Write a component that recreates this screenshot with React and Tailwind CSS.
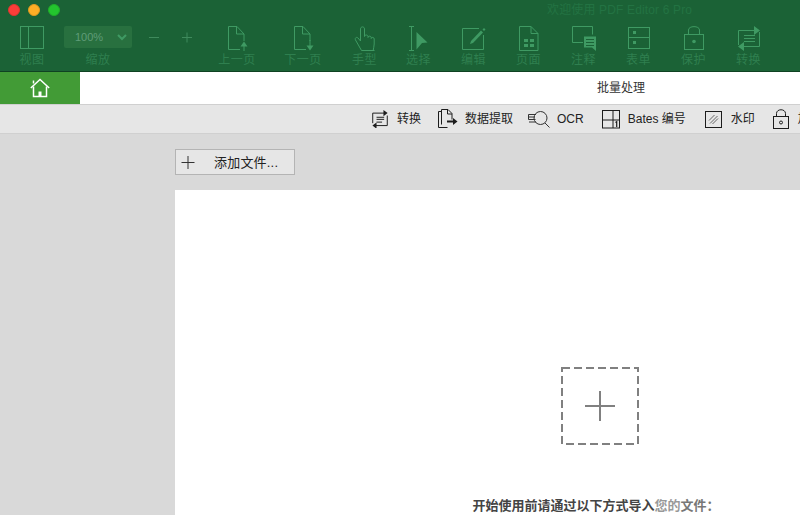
import React from "react";

const FONT = "font-['Liberation_Sans','Noto_Sans_CJK_SC',sans-serif]";

// toolbar glyphs, 26x26 box
const ViewIcon = () => (
  <svg width="26" height="26" viewBox="0 0 26 26" fill="none" stroke="currentColor">
    <rect x="1.5" y=".5" width="23" height="22" />
    <path d="M9.5 .5v22" />
  </svg>
);
const PageBase = ({ children }) => (
  <svg width="26" height="26" viewBox="0 0 26 26" fill="none" stroke="currentColor">
    <path d="M16 23.5H4.5v-23H13l7 7.5v7" />
    <path d="M12.5 .5v7.5h7.5" />
    {children}
  </svg>
);
const PrevIcon = () => (
  <PageBase>
    <path d="M20 25v-7" />
    <path d="M16.500 20.500l3.500-5 3.500 5z" fill="currentColor" stroke="none" />
  </PageBase>
);
const NextIcon = () => (
  <PageBase>
    <path d="M20 14v7" />
    <path d="M16.500 19.500l3.500 5 3.500-5z" fill="currentColor" stroke="none" />
  </PageBase>
);
const HandIcon = () => (
  <svg width="26" height="26" viewBox="0 0 26 26" fill="none" stroke="currentColor">
    <path d="M9.500 24.500L3.500 14c-1-2 1-3.500 2.500-2l2.500 3V3c0-2.800 4-2.800 4 0v7.500c0-2 3.500-2 3.500 0v1c0-1.800 3.200-1.800 3.200 0v1c0-1.600 3-1.600 3 .5v5c0 2.500-.8 4-1 6.500" />
    <path d="M9.500 24.500h13" />
  </svg>
);
const SelectIcon = () => (
  <svg width="26" height="26" viewBox="0 0 26 26" fill="none" stroke="currentColor">
    <path d="M3 .5h5M3 24.500h5M5.500 .5v24" />
    <path d="M10.500 6l11 10.500-5.500.5-5.500 6.500z" fill="currentColor" stroke="none" />
  </svg>
);
const EditIcon = () => (
  <svg width="26" height="26" viewBox="0 0 26 26" fill="none" stroke="currentColor">
    <path d="M18 2.500H1.500v21h21V9" />
    <path d="M9 18l1-3L20 4.500l2 2L12 17z" fill="currentColor" stroke="none" />
    <path d="M21.500 3.500l1.500-1.500 1.500 1.500-1.500 1.500z" fill="currentColor" stroke="none" />
  </svg>
);
const PagesIcon = () => (
  <svg width="26" height="26" viewBox="0 0 26 26" fill="none" stroke="currentColor">
    <path d="M3.500 24.500V.5H15l7 7v17z" />
    <path d="M15 .5v7h7" />
    <path d="M8 13h4v3H8zM14 13h4v3h-4zM8 18h4v3H8zM14 18h4v3h-4z" fill="currentColor" stroke="none" />
  </svg>
);
const NoteIcon = () => (
  <svg width="26" height="26" viewBox="0 0 26 26" fill="none" stroke="currentColor">
    <path d="M12 16.500H1.500v-16h20v8" />
    <path d="M13 10.500h12v14.500l-4-3.500h-8z" fill="currentColor" stroke="none" />
    <path d="M15 13.500h8M15 16.500h8M15 19.500h8" stroke="#1b6236" />
  </svg>
);
const FormIcon = () => (
  <svg width="26" height="26" viewBox="0 0 26 26" fill="none" stroke="currentColor">
    <rect x="2.500" y="1.500" width="21" height="21" />
    <path d="M2.500 11.500h21" />
    <path d="M7 5h3v3H7zM7 15h3v3H7z" fill="currentColor" stroke="none" />
  </svg>
);
const LockIcon = () => (
  <svg width="26" height="26" viewBox="0 0 26 26" fill="none" stroke="currentColor">
    <rect x="3.500" y="8.500" width="19" height="15" />
    <path d="M7.500 8.500V4c0-4.500 11-4.500 11 0v4.500" />
    <circle cx="13" cy="15.500" r="1.800" fill="currentColor" stroke="none" />
  </svg>
);
const ConvertIcon = () => (
  <svg width="26" height="26" viewBox="0 0 26 26" fill="none" stroke="currentColor">
    <path d="M20 4.500H2.500V19" />
    <path d="M6 20.500h17.500V6" />
    <path d="M8 9.500h11M8 12.500h11M8 15.500h11" />
    <path d="M18 0l6 4.500-6 4.500zM8 16l-6 4.500 6 4.500z" fill="currentColor" stroke="none" />
  </svg>
);

const tools = [
  { label: "上一页", Icon: PrevIcon, cls: "w-[60px] ml-[14px]" },
  { label: "下一页", Icon: NextIcon, cls: "w-[60px] ml-[6px]" },
  { label: "手型", Icon: HandIcon, cls: "w-[55px] ml-[4px]" },
  { label: "选择", Icon: SelectIcon, cls: "w-[55px] ml-[-1px]" },
  { label: "编辑", Icon: EditIcon, cls: "w-[55px]" },
  { label: "页面", Icon: PagesIcon, cls: "w-[55px]" },
  { label: "注释", Icon: NoteIcon, cls: "w-[55px]" },
  { label: "表单", Icon: FormIcon, cls: "w-[55px]" },
  { label: "保护", Icon: LockIcon, cls: "w-[55px]" },
  { label: "转换", Icon: ConvertIcon, cls: "w-[55px]" },
];

const Tool = ({ label, Icon, cls }) => (
  <div className={`flex flex-col items-center shrink-0 ${cls}`}>
    <div className="h-[26px] text-[#3f9a63]">
      <Icon />
    </div>
    <span className="text-[12px] leading-[14px] mt-[1px] tracking-[0.5px] text-[#2f7f4f] whitespace-nowrap">{label}</span>
  </div>
);

// ribbon glyphs
const RibbonConvert = () => (
  <svg width="18" height="18" viewBox="0 0 26 26" fill="none" stroke="#1c1c1c" strokeWidth="1.400">
    <path d="M20 4.500H2.500V19" />
    <path d="M6 22.500h17.500V8" />
    <path d="M8 10.500h11M8 13.500h11M8 17.500h8" />
    <path d="M18 0l6 4.500-6 4.500zM8 18l-6 4.500 6 4.500z" fill="#1c1c1c" stroke="none" />
  </svg>
);
const RibbonExtract = () => (
  <svg width="21" height="20" viewBox="0 0 21 20" fill="none" stroke="#1c1c1c">
    <path d="M4.500 2.500H1.500v16h9" />
    <path d="M4.500 15.500V.5H11l4 4v6" />
    <path d="M10.500 .5v4.500H15" />
    <path d="M10 12.500h6" strokeWidth="2" />
    <path d="M16 9l4.500 3.500L16 16z" fill="#1c1c1c" stroke="none" />
  </svg>
);
const RibbonOcr = () => (
  <svg width="23" height="18" viewBox="0 0 23 18" fill="none" stroke="#333">
    <path d="M8 4.500H.5v5h7M1 12h7" />
    <path d="M1 7h6" />
    <circle cx="12.500" cy="8" r="6.500" />
    <path d="M17 13l4.500 4.500" />
  </svg>
);
const RibbonBates = () => (
  <svg width="18" height="19" viewBox="0 0 18 19" fill="none" stroke="#1c1c1c">
    <rect x=".5" y=".5" width="17" height="17.500" />
    <path d="M.5 10h17M11 .5V18" />
    <path d="M13.500 12.500l1.200-.8v5.300" strokeWidth="1.200" />
  </svg>
);
const RibbonMark = () => (
  <svg width="17" height="17" viewBox="0 0 17 17" fill="none" stroke="#1c1c1c">
    <rect x=".5" y=".5" width="16" height="16" />
    <path d="M4 9.500L9.500 4M5 12.500L12.500 5M7.500 13L13 7.500" stroke="#666" />
  </svg>
);
const RibbonLock = () => (
  <svg width="16" height="20" viewBox="0 0 16 20" fill="none" stroke="#1c1c1c">
    <rect x=".5" y="7.500" width="15" height="12" />
    <path d="M3.500 7.500V4.500c0-5 9-5 9 0v3" />
    <circle cx="8" cy="13.500" r="1.500" />
  </svg>
);

const RibbonItem = ({ icon, label, gap, cls }) => (
  <div className={`flex items-center shrink-0 ${gap} ${cls}`}>
    {icon}
    <span className="text-[12px] text-[#222] whitespace-nowrap">{label}</span>
  </div>
);

export default function App() {
  return (
    <div className={`w-[800px] h-[515px] overflow-hidden flex flex-col bg-[#d9d9d9] ${FONT}`}>
      {/* Title bar and toolbar */}
      <div className="h-[72px] shrink-0 bg-[#1b6236] border-b border-[#0f4222] flex flex-col">
        <div className="h-[19px] shrink-0 flex items-center relative">
          <div className="flex gap-[8px] pl-[8px]">
            <span className="w-[12px] h-[12px] rounded-full bg-[#fc3d39] border border-[#e0352f]" />
            <span className="w-[12px] h-[12px] rounded-full bg-[#fdae26] border border-[#e09a20]" />
            <span className="w-[12px] h-[12px] rounded-full bg-[#23c52e] border border-[#1fae29]" />
          </div>
          <span className="absolute left-[547px] top-[2px] text-[12px] leading-[16px] tracking-[0.15px] text-[#237343] whitespace-nowrap">
            欢迎使用 PDF Editor 6 Pro
          </span>
        </div>
        <div className="flex items-start pt-[7px] pl-[19px]">
          <div className="w-[26px] flex flex-col items-center shrink-0">
            <div className="h-[26px] text-[#3f9a63]">
              <ViewIcon />
            </div>
            <span className="text-[12px] leading-[14px] mt-[1px] tracking-[0.5px] text-[#2f7f4f] whitespace-nowrap">视图</span>
          </div>
          <div className="w-[68px] ml-[19px] shrink-0 flex flex-col items-center">
            <div className="w-[68px] h-[22px] rounded-[2px] bg-[#28703f] flex items-center justify-between pl-[11px] pr-[5px]">
              <span className="text-[11px] text-[#5f9c78]">100%</span>
              <svg width="10" height="7" viewBox="0 0 10 7" fill="none" stroke="#3f9a63" strokeWidth="2">
                <path d="M1 1l4 4 4-4" />
              </svg>
            </div>
            <span className="text-[12px] leading-[14px] mt-[5px] tracking-[0.5px] text-[#2f7f4f] whitespace-nowrap">缩放</span>
          </div>
          <svg className="ml-[16px] mt-[5px] shrink-0" width="12" height="12" viewBox="0 0 12 12" stroke="#3f8a5c">
            <path d="M1 6.500h10" />
          </svg>
          <svg className="ml-[21px] mt-[5px] shrink-0" width="12" height="12" viewBox="0 0 12 12" stroke="#3f8a5c">
            <path d="M1 6.500h10M6 1.500v10" />
          </svg>
          {tools.map((t) => (
            <Tool key={t.label} {...t} />
          ))}
        </div>
      </div>

      {/* Tab row */}
      <div className="h-[32px] shrink-0 bg-white flex">
        <div className="w-[80px] bg-[#429b36] flex items-center justify-center">
          <svg width="20" height="20" viewBox="0 0 20 20" fill="none" stroke="#fff" strokeWidth="1.500">
            <path d="M.8 10L10 1.500 19.200 10" />
            <path d="M3.500 8.500V18.500H16.500V8.500" />
            <path d="M8.500 18.500v-5h3v5" fill="#fff" stroke="none" />
            <path d="M3.500 2.500v3" />
          </svg>
        </div>
        <div className="flex-1 flex items-center">
          <span className="ml-[517px] text-[12px] text-[#333] whitespace-nowrap">批量处理</span>
        </div>
      </div>

      {/* Ribbon */}
      <div className="h-[30px] shrink-0 bg-[#e6e6e6] border-t border-b border-[#d0d0d0] flex items-center pl-[371px] overflow-hidden">
        <RibbonItem icon={<RibbonConvert />} label="转换" gap="gap-[8px]" cls="" />
        <RibbonItem icon={<RibbonExtract />} label="数据提取" gap="gap-[7px]" cls="ml-[16px]" />
        <RibbonItem icon={<RibbonOcr />} label="OCR" gap="gap-[6px]" cls="ml-[15px]" />
        <RibbonItem icon={<RibbonBates />} label="Bates 编号" gap="gap-[8px]" cls="ml-[18px]" />
        <RibbonItem icon={<RibbonMark />} label="水印" gap="gap-[9px]" cls="ml-[19px]" />
        <RibbonItem icon={<RibbonLock />} label="加密" gap="gap-[9px]" cls="ml-[18px]" />
      </div>

      {/* Content */}
      <div className="flex-1 pl-[175px] flex flex-col min-h-0">
        <div className="h-[56px] shrink-0 flex items-start pt-[15px]">
          <button className="w-[120px] h-[26px] bg-[#e6e6e6] border border-[#b4b4b4] flex items-center pl-[5px]">
            <svg width="14" height="14" viewBox="0 0 14 14" stroke="#333">
              <path d="M.5 7.500h13M7 1v13" />
            </svg>
            <span className="ml-[19px] mt-[2px] text-[13px] tracking-[0.2px] text-[#222] whitespace-nowrap">添加文件...</span>
          </button>
        </div>
        <div className="flex-1 bg-white flex flex-col items-center overflow-hidden">
          <div className="mt-[177px] ml-[225px] w-[78px] h-[78px] shrink-0 relative flex items-center justify-center">
            <svg className="absolute inset-0" width="78" height="78" viewBox="0 0 78 78" fill="none" stroke="#808080" strokeWidth="2">
              <rect x="1" y="1" width="76" height="76" strokeDasharray="8 4" />
            </svg>
            <svg width="30" height="30" viewBox="0 0 30 30" stroke="#808080" strokeWidth="2">
              <path d="M0 15h30M15 0v30" />
            </svg>
          </div>
          <span className="mt-[51px] ml-[217px] text-[13px] font-bold text-[#444] whitespace-nowrap">
            开始使用前请通过以下方式导入<span className="text-[#999]">您的</span><span className="text-[#777]">文件：</span>
          </span>
        </div>
      </div>
    </div>
  );
}
